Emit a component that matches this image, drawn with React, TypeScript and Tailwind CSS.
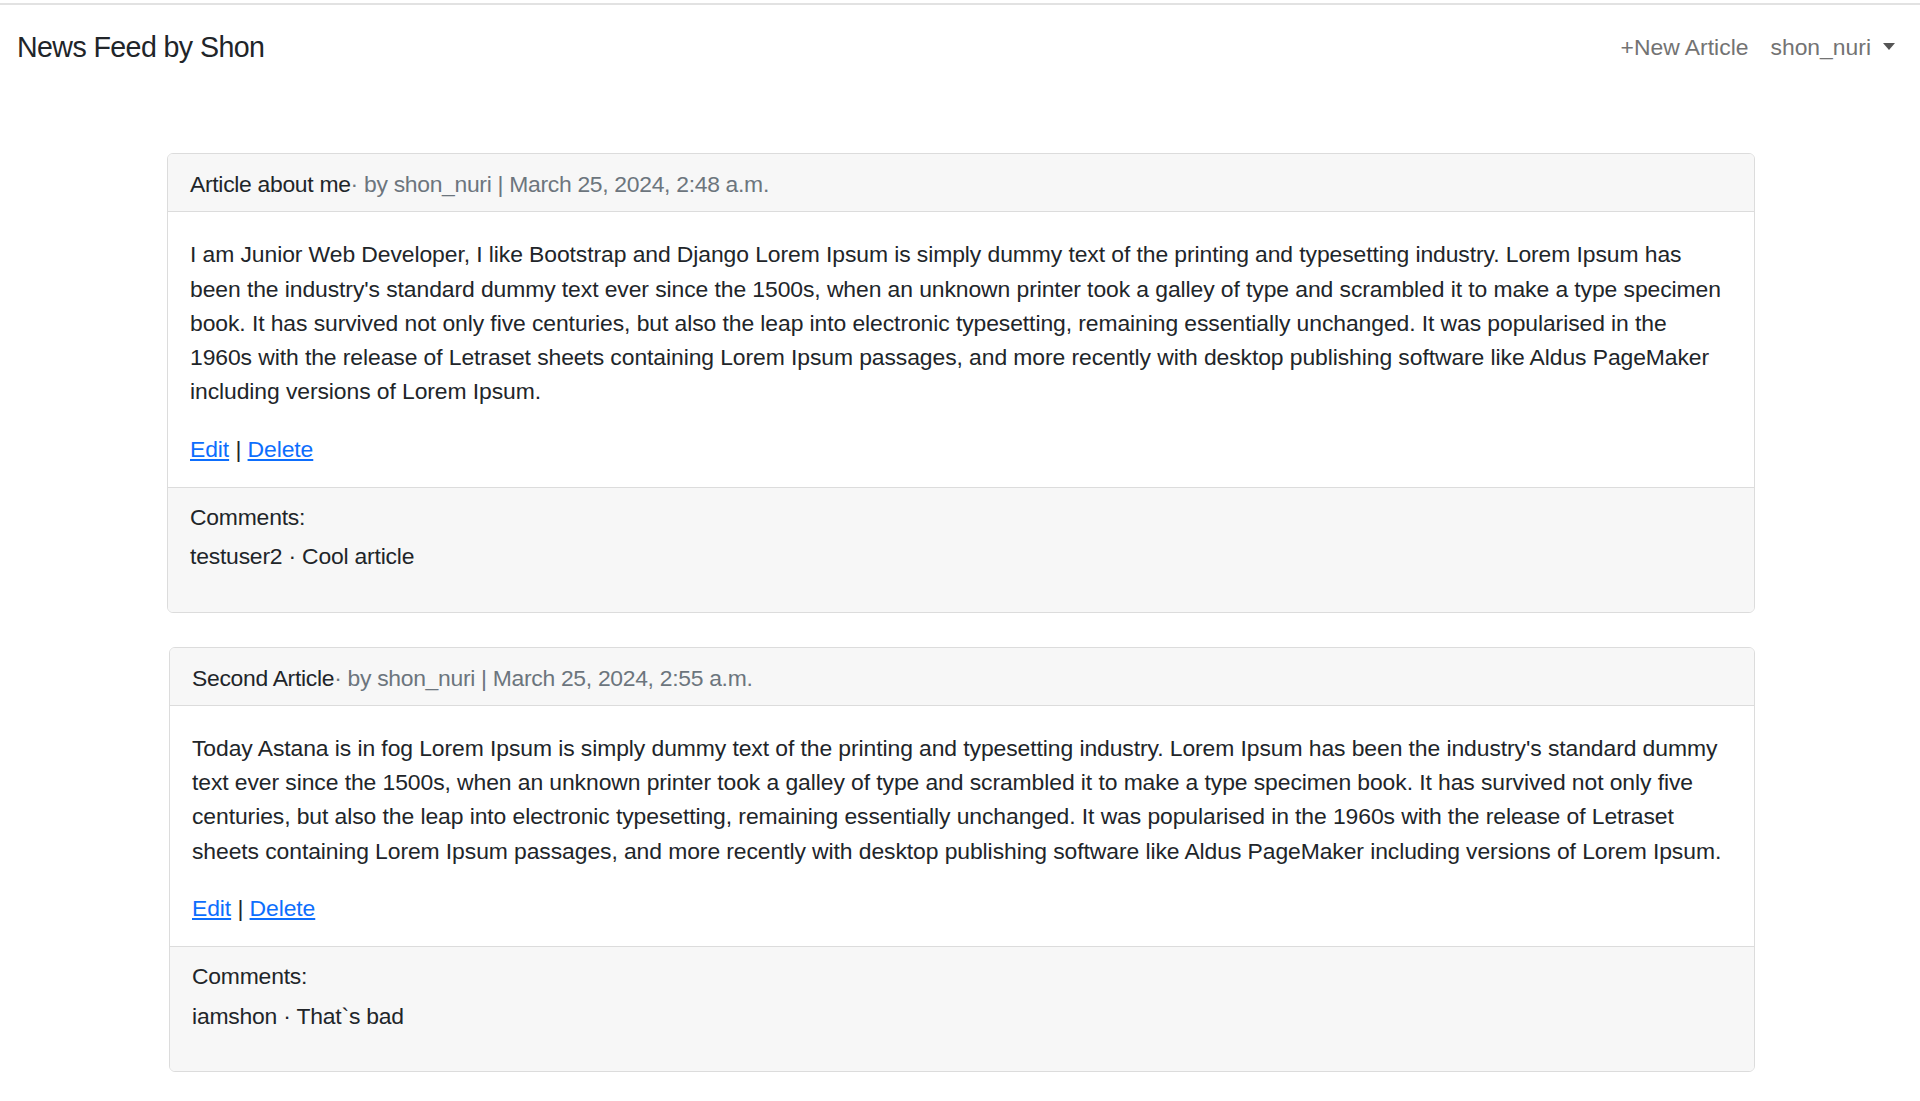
import React from "react";

const font = { fontFamily: '"Liberation Sans", Arial, sans-serif' };

type Article = {
  title: string;
  meta: string;
  lines: string[];
  comment: string;
  shift?: boolean;
};

const articles: Article[] = [
  {
    title: "Article about me",
    meta: "· by shon_nuri | March 25, 2024, 2:48 a.m.",
    lines: [
      "I am Junior Web Developer, I like Bootstrap and Django Lorem Ipsum is simply dummy text of the printing and typesetting industry. Lorem Ipsum has",
      "been the industry's standard dummy text ever since the 1500s, when an unknown printer took a galley of type and scrambled it to make a type specimen",
      "book. It has survived not only five centuries, but also the leap into electronic typesetting, remaining essentially unchanged. It was popularised in the",
      "1960s with the release of Letraset sheets containing Lorem Ipsum passages, and more recently with desktop publishing software like Aldus PageMaker",
      "including versions of Lorem Ipsum.",
    ],
    comment: "testuser2 · Cool article",
  },
  {
    title: "Second Article",
    meta: "· by shon_nuri | March 25, 2024, 2:55 a.m.",
    lines: [
      "Today Astana is in fog Lorem Ipsum is simply dummy text of the printing and typesetting industry. Lorem Ipsum has been the industry's standard dummy",
      "text ever since the 1500s, when an unknown printer took a galley of type and scrambled it to make a type specimen book. It has survived not only five",
      "centuries, but also the leap into electronic typesetting, remaining essentially unchanged. It was popularised in the 1960s with the release of Letraset",
      "sheets containing Lorem Ipsum passages, and more recently with desktop publishing software like Aldus PageMaker including versions of Lorem Ipsum.",
    ],
    comment: "iamshon · That`s bad",
    shift: true,
  },
];

function Card({ a }: { a: Article }) {
  return (
    <div
      className={
        "border border-[#dcdcdc] rounded-[6px] overflow-hidden bg-white " +
        (a.shift ? "ml-[2px] w-[1586px]" : "w-[1588px]")
      }
    >
      <div className="bg-[#f7f7f7] border-b border-[#dcdcdc] pl-[22px] pr-[23px] pt-[13px] pb-[10px] text-[22.9px] leading-[34.3px] text-[#212529] whitespace-nowrap tracking-[-0.3px]">
        {a.title}
        <span className="text-[#6c757d]">{a.meta}</span>
      </div>
      <div className="pl-[22px] pr-[10px] pt-[25px] pb-[21px] text-[22.9px] leading-[34.3px] text-[#212529] tracking-[-0.08px]">
        <p className="mb-[22.9px]">
          {a.lines.map((l, i) => (
            <span key={i} className="block whitespace-nowrap">
              {l}
            </span>
          ))}
        </p>
        <p>
          <a href="#" className="text-[#0d6efd] underline">
            Edit
          </a>{" "}
          |{" "}
          <a href="#" className="text-[#0d6efd] underline">
            Delete
          </a>
        </p>
      </div>
      <div className="bg-[#f7f7f7] border-t border-[#dcdcdc] pl-[22px] pr-[23px] pt-[12px] pb-[38px] text-[22.9px] leading-[34.3px] text-[#212529] tracking-[-0.2px]">
        <div>Comments:</div>
        <div className="mt-[5px]">{a.comment}</div>
      </div>
    </div>
  );
}

export default function App() {
  return (
    <div className="min-h-screen bg-white" style={font}>
      <div className="pt-[3px]">
        <div className="h-[2px] bg-[#e2e2e2]" />
      </div>
      <nav className="h-[84px] flex items-center justify-between pl-[17px] pr-[25px]">
        <div className="text-[28.6px] leading-[43px] text-[#212529] tracking-[-0.6px]">
          News Feed by Shon
        </div>
        <div className="flex items-center text-[22.9px] leading-[34.3px] text-[#737373]">
          <a href="#" className="tracking-[0px]">+New Article</a>
          <a href="#" className="ml-[22px] flex items-center tracking-[0px]">
            shon_nuri
            <span className="ml-[12px] inline-block w-0 h-0 border-l-[6.5px] border-r-[6.5px] border-t-[7px] border-l-transparent border-r-transparent border-t-[#555]" />
          </a>
        </div>
      </nav>
      <main className="pt-[64px] pl-[167px] flex flex-col gap-[34px] pb-[40px]">
        {articles.map((a, i) => (
          <Card key={i} a={a} />
        ))}
      </main>
    </div>
  );
}
